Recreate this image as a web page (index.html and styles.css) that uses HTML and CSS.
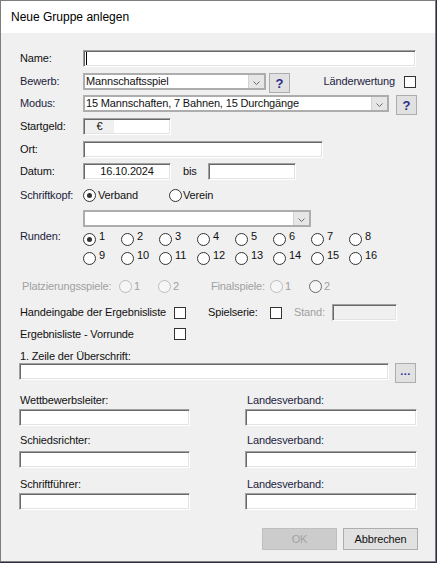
FILE: index.html
```html
<!DOCTYPE html>
<html lang="de">
<head>
<meta charset="utf-8">
<title>Neue Gruppe anlegen</title>
<link rel="stylesheet" href="styles.css">
</head>
<body>
<div class="window">
  <div class="titlebar"><span class="title">Neue Gruppe anlegen</span></div>
  <div class="content">

    <div class="row r-name">
      <span class="lbl">Name:</span>
      <div class="field w-name"><span class="caret"></span></div>
    </div>

    <div class="row r-bewerb">
      <span class="lbl navy">Bewerb:</span>
      <div class="combo w-bewerb">
        <span class="combo-text">Mannschaftsspiel</span>
        <span class="combo-btn"><svg width="7" height="4" viewBox="0 0 7 4"><polyline points="0.5,0.5 3.5,3.5 6.5,0.5" fill="none" stroke="#6a6a6a"/></svg></span>
      </div>
      <div class="qbtn q-bewerb">?</div>
      <div class="lw"><span class="navy">Länderwertung</span><span class="cb lw-cb"></span></div>
    </div>

    <div class="row r-modus">
      <span class="lbl navy">Modus:</span>
      <div class="combo w-modus">
        <span class="combo-text">15 Mannschaften, 7 Bahnen, 15 Durchgänge</span>
        <span class="combo-btn"><svg width="7" height="4" viewBox="0 0 7 4"><polyline points="0.5,0.5 3.5,3.5 6.5,0.5" fill="none" stroke="#6a6a6a"/></svg></span>
      </div>
      <div class="qbtn q-modus">?</div>
    </div>

    <div class="row r-start">
      <span class="lbl">Startgeld:</span>
      <div class="field w-start"><span class="euro">€</span></div>
    </div>

    <div class="row r-ort">
      <span class="lbl">Ort:</span>
      <div class="field w-ort"></div>
    </div>

    <div class="row r-datum">
      <span class="lbl">Datum:</span>
      <div class="field w-datum date">16.10.2024</div>
      <span class="bis">bis</span>
      <div class="field w-datum"></div>
    </div>

    <div class="row r-kopf">
      <span class="lbl navy">Schriftkopf:</span>
      <div class="opt opt-verband"><span class="radio on"></span><span class="opt-text">Verband</span></div>
      <div class="opt"><span class="radio"></span><span class="opt-text tight">Verein</span></div>
    </div>

    <div class="row r-kombo">
      <div class="combo w-kombo">
        <span class="combo-text"></span>
        <span class="combo-btn"><svg width="7" height="4" viewBox="0 0 7 4"><polyline points="0.5,0.5 3.5,3.5 6.5,0.5" fill="none" stroke="#6a6a6a"/></svg></span>
      </div>
    </div>

    <div class="r-runden">
      <span class="lbl navy runden-lbl">Runden:</span>
      <div class="rgrid">
        <div class="rcell"><span class="radio on"></span><span class="num">1</span></div>
        <div class="rcell"><span class="radio"></span><span class="num">2</span></div>
        <div class="rcell"><span class="radio"></span><span class="num">3</span></div>
        <div class="rcell"><span class="radio"></span><span class="num">4</span></div>
        <div class="rcell"><span class="radio"></span><span class="num">5</span></div>
        <div class="rcell"><span class="radio"></span><span class="num">6</span></div>
        <div class="rcell"><span class="radio"></span><span class="num">7</span></div>
        <div class="rcell"><span class="radio"></span><span class="num">8</span></div>
        <div class="rcell"><span class="radio"></span><span class="num">9</span></div>
        <div class="rcell"><span class="radio"></span><span class="num">10</span></div>
        <div class="rcell"><span class="radio"></span><span class="num">11</span></div>
        <div class="rcell"><span class="radio"></span><span class="num">12</span></div>
        <div class="rcell"><span class="radio"></span><span class="num">13</span></div>
        <div class="rcell"><span class="radio"></span><span class="num">14</span></div>
        <div class="rcell"><span class="radio"></span><span class="num">15</span></div>
        <div class="rcell"><span class="radio"></span><span class="num">16</span></div>
      </div>
    </div>

    <div class="row r-platz disabled">
      <span class="lbl-platz">Platzierungsspiele:</span>
      <div class="opt p1"><span class="radio dis"></span><span class="opt-text">1</span></div>
      <div class="opt p2"><span class="radio dis"></span><span class="opt-text">2</span></div>
      <span class="lbl-final">Finalspiele:</span>
      <div class="opt p1"><span class="radio dis"></span><span class="opt-text">1</span></div>
      <div class="opt"><span class="radio dis2"></span><span class="opt-text">2</span></div>
    </div>

    <div class="row r-hand">
      <span class="lbl-wide">Handeingabe der Ergebnisliste</span>
      <span class="cb"></span>
      <span class="lbl-serie">Spielserie:</span>
      <span class="cb"></span>
      <span class="lbl-stand">Stand:</span>
      <div class="field w-stand dis-field"></div>
    </div>

    <div class="row r-vor">
      <span class="lbl-wide">Ergebnisliste - Vorrunde</span>
      <span class="cb"></span>
    </div>

    <div class="row r-zeile-lbl">
      <span class="plain">1. Zeile der Überschrift:</span>
    </div>

    <div class="row r-zeile">
      <div class="field w-zeile"></div>
      <div class="qbtn dots">...</div>
    </div>

    <div class="row pair-lbl pl1">
      <span class="col">Wettbewerbsleiter:</span>
      <span class="col navy">Landesverband:</span>
    </div>
    <div class="row pair-in pi1">
      <div class="field col"></div>
      <div class="field col"></div>
    </div>

    <div class="row pair-lbl pl2">
      <span class="col">Schiedsrichter:</span>
      <span class="col navy">Landesverband:</span>
    </div>
    <div class="row pair-in pi2">
      <div class="field col"></div>
      <div class="field col"></div>
    </div>

    <div class="row pair-lbl pl3">
      <span class="col">Schriftführer:</span>
      <span class="col navy">Landesverband:</span>
    </div>
    <div class="row pair-in pi3">
      <div class="field col"></div>
      <div class="field col"></div>
    </div>

    <div class="btnrow">
      <div class="btn btn-ok">OK</div>
      <div class="btn">Abbrechen</div>
    </div>

  </div>
</div>
</body>
</html>
```

FILE: styles.css
```css
* { box-sizing: border-box; }

html, body {
  margin: 0;
  padding: 0;
}

body {
  width: 437px;
  height: 563px;
  overflow: hidden;
  background: #2c2c44;
  font-family: "Liberation Sans", Arial, sans-serif;
  font-size: 11px;
  letter-spacing: -0.15px;
  color: #111;
}

.window {
  width: 436px;
  height: 562px;
  border: 1px solid #7d7d7d;
  background: #f0f0f0;
  display: flex;
  flex-direction: column;
}

.titlebar {
  flex: none;
  height: 32px;
  background: #fff;
  display: flex;
  align-items: center;
  padding-left: 10px;
  font-size: 12px;
  line-height: 14px;
  letter-spacing: 0;
  color: #000;
}

.content {
  display: flex;
  flex-direction: column;
  padding: 17px 18px 0 18px;
}

.navy { color: #1c1c3e; }

.row {
  display: flex;
  align-items: center;
  height: 17px;
  flex: none;
  line-height: 13px;
  white-space: nowrap;
}

.lbl {
  width: 64px;
  flex: none;
  padding-left: 1px;
  line-height: 13px;
}

/* sunken edit field */
.field {
  flex: none;
  height: 17px;
  background: #fff;
  border: 1px solid;
  border-color: #a0a0a0 #fff #fff #a0a0a0;
  box-shadow: inset 1px 1px 0 #696969, inset -1px -1px 0 #e3e3e3;
  display: flex;
  align-items: center;
}

.caret {
  width: 1px;
  height: 13px;
  background: #000;
  margin-left: 2px;
}

.w-name { width: 333px; }
.w-start { width: 88px; }
.w-ort { width: 240px; }
.w-datum { width: 88px; }
.w-stand { width: 65px; }
.w-zeile { width: 370px; }

.euro {
  width: 29px;
  height: 13px;
  margin: 1px 0 1px 1px;
  background: #f0f0f0;
  text-align: center;
  line-height: 13px;
}

.date { justify-content: center; }

.bis {
  width: 25px;
  margin-left: 12px;
  flex: none;
}

.dis-field { background: #f0f0f0; }

/* combo box */
.combo {
  flex: none;
  height: 17px;
  display: flex;
  border: 2px solid #adadad;
  background: #fff;
}

.combo-text {
  flex: 1;
  padding-left: 1px;
  line-height: 13px;
  overflow: hidden;
}

.combo-btn {
  width: 16px;
  flex: none;
  background: #e6e6e6;
  border-left: 1px solid #d2d2d2;
  display: flex;
  align-items: center;
  justify-content: center;
  padding-top: 2px;
}

.w-bewerb { width: 183px; }
.w-modus { width: 306px; }
.w-kombo { width: 228px; }

/* small push buttons */
.qbtn {
  flex: none;
  align-self: flex-start;
  width: 21px;
  height: 20px;
  background: #e1e1e1;
  border: 1px solid #adadad;
  color: #2a2a8c;
  font-weight: bold;
  font-size: 13px;
  letter-spacing: 0;
  display: flex;
  align-items: center;
  justify-content: center;
}

.q-bewerb { margin-left: 3px; }
.q-modus { margin-left: auto; }

.dots {
  margin-left: 6px;
  font-size: 11px;
  letter-spacing: 0.5px;
  padding-bottom: 3px;
  color: #2a2a9c;
}

.lw {
  margin-left: auto;
  margin-right: 1px;
  display: flex;
  align-items: center;
}

.lw-cb { margin-left: 9px; }

.cb {
  flex: none;
  width: 12px;
  height: 12px;
  border: 1px solid #333;
  background: #fff;
}

/* radios */
.radio {
  flex: none;
  width: 13px;
  height: 13px;
  border-radius: 50%;
  border: 1px solid #333;
  background: #fff;
  display: flex;
  align-items: center;
  justify-content: center;
}

.radio.on::after {
  content: "";
  width: 5px;
  height: 5px;
  border-radius: 50%;
  background: #333;
}

.radio.dis {
  border-color: #bcbcbc;
  background: #f6f6f6;
}

.radio.dis2 {
  border-color: #6a6a6a;
  background: #f6f6f6;
}

.opt {
  display: flex;
  align-items: center;
  flex: none;
}

.opt-text { margin-left: 2px; }
.opt-text.tight { margin-left: 1px; }

.opt-verband { width: 86px; }

/* rows vertical placement */
.r-bewerb { margin-top: 6px; }
.r-modus { margin-top: 5px; }
.r-start { margin-top: 6px; }
.r-ort { margin-top: 6px; }
.r-datum { margin-top: 5px; }
.r-kopf { margin-top: 8px; height: 14px; }
.r-kombo { margin-top: 8px; padding-left: 64px; }

.r-runden {
  margin-top: 5px;
  display: flex;
  align-items: flex-start;
  flex: none;
}

.runden-lbl { margin-top: -2px; }

.rgrid {
  display: grid;
  grid-template-columns: repeat(8, 38px);
  row-gap: 5px;
}

.rcell {
  height: 14px;
  display: flex;
  align-items: flex-start;
}

.rcell .radio { margin-top: 1px; }

.num {
  margin-left: 3px;
  margin-top: -2px;
  line-height: 13px;
}

.r-platz { margin-top: 14px; height: 14px; }
.disabled { color: #a0a0a0; }

.lbl-platz {
  width: 100px;
  flex: none;
  padding-left: 3px;
}

.p1 { width: 39px; }
.p2 { width: 53px; }
.lbl-final { width: 59px; flex: none; }

.r-hand { margin-top: 11px; }

.lbl-wide {
  width: 155px;
  flex: none;
  padding-left: 1px;
}

.lbl-serie {
  width: 62px;
  margin-left: 22px;
  flex: none;
}

.lbl-stand {
  width: 38px;
  margin-left: 12px;
  flex: none;
  color: #a0a0a0;
}

.r-vor { margin-top: 6px; height: 14px; }

.r-zeile-lbl { margin-top: 9px; height: 13px; }
.plain { padding-left: 1px; }

.r-zeile { margin-top: 0; }

.pair-lbl { height: 13px; }

.col {
  width: 171px;
  flex: none;
  padding-left: 1px;
}

.col + .col { margin-left: 55px; width: 172px; }
.pair-lbl .col + .col { padding-left: 2px; }
.pair-in .col:first-child { padding-left: 0; }
.pair-in .col + .col { padding-left: 0; }

.pl1 { margin-top: 14px; }
.pi1 { margin-top: 2px; }
.pl2 { margin-top: 8px; }
.pi2 { margin-top: 4px; }
.pl3 { margin-top: 10px; }
.pi3 { margin-top: 2px; }

.btnrow {
  display: flex;
  justify-content: flex-end;
  gap: 6px;
  margin-top: 18px;
  margin-right: -1px;
}

.btn {
  width: 75px;
  height: 22px;
  background: #e1e1e1;
  border: 1px solid #adadad;
  display: flex;
  align-items: center;
  justify-content: center;
}

.btn-ok {
  background: #cccccc;
  border-color: #bfbfbf;
  color: #a3a3a3;
}
```
